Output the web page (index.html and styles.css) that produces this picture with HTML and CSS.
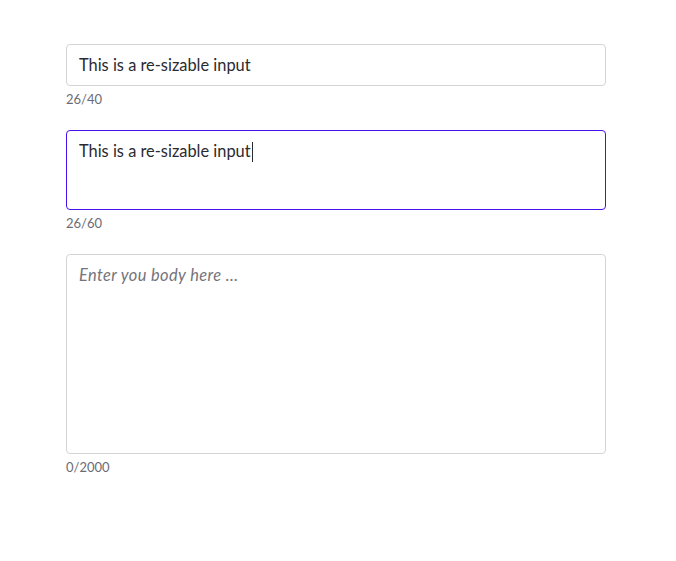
FILE: index.html
```html
<!DOCTYPE html>
<html>
<head>
<meta charset="utf-8">
<link rel="stylesheet" href="styles.css">
</head>
<body>
<main class="page">
  <div class="field">
    <div class="box box-single">This is a re-sizable input</div>
    <div class="counter">26/40</div>
  </div>
  <div class="field">
    <div class="box box-focus box-medium">This is a re-sizable input<span class="caret"></span></div>
    <div class="counter">26/60</div>
  </div>
  <div class="field">
    <div class="box box-large"><span class="placeholder">Enter you body here ...</span></div>
    <div class="counter">0/2000</div>
  </div>
</main>
</body>
</html>
```
FILE: styles.css
```css
html, body {
  margin: 0;
  padding: 0;
  background: #ffffff;
}
body {
  font-family: Lato, "Noto Sans", sans-serif;
  color: #2a2a31;
}
.page {
  width: 540px;
  padding: 44px 0 0 66px;
}
.field {
  margin-bottom: 22px;
}
.box {
  box-sizing: border-box;
  border: 1px solid #d4d4d8;
  border-radius: 4px;
  padding: 10px 12px;
  font-size: 16.4px;
  line-height: 20px;
  background: #fff;
}
.box-single {
  height: 42px;
}
.box-medium {
  height: 80px;
}
.box-large {
  height: 200px;
}
.box-focus {
  border-color: #4a10ec;
}
.caret {
  display: inline-block;
  width: 1px;
  height: 20px;
  margin-left: 1px;
  background: #2a2a31;
  vertical-align: -5px;
}
.placeholder {
  font-style: italic;
  letter-spacing: 0.4px;
  color: #75737b;
}
.counter {
  margin-top: 4px;
  font-size: 13px;
  line-height: 18px;
  color: #6b6b75;
}
```
